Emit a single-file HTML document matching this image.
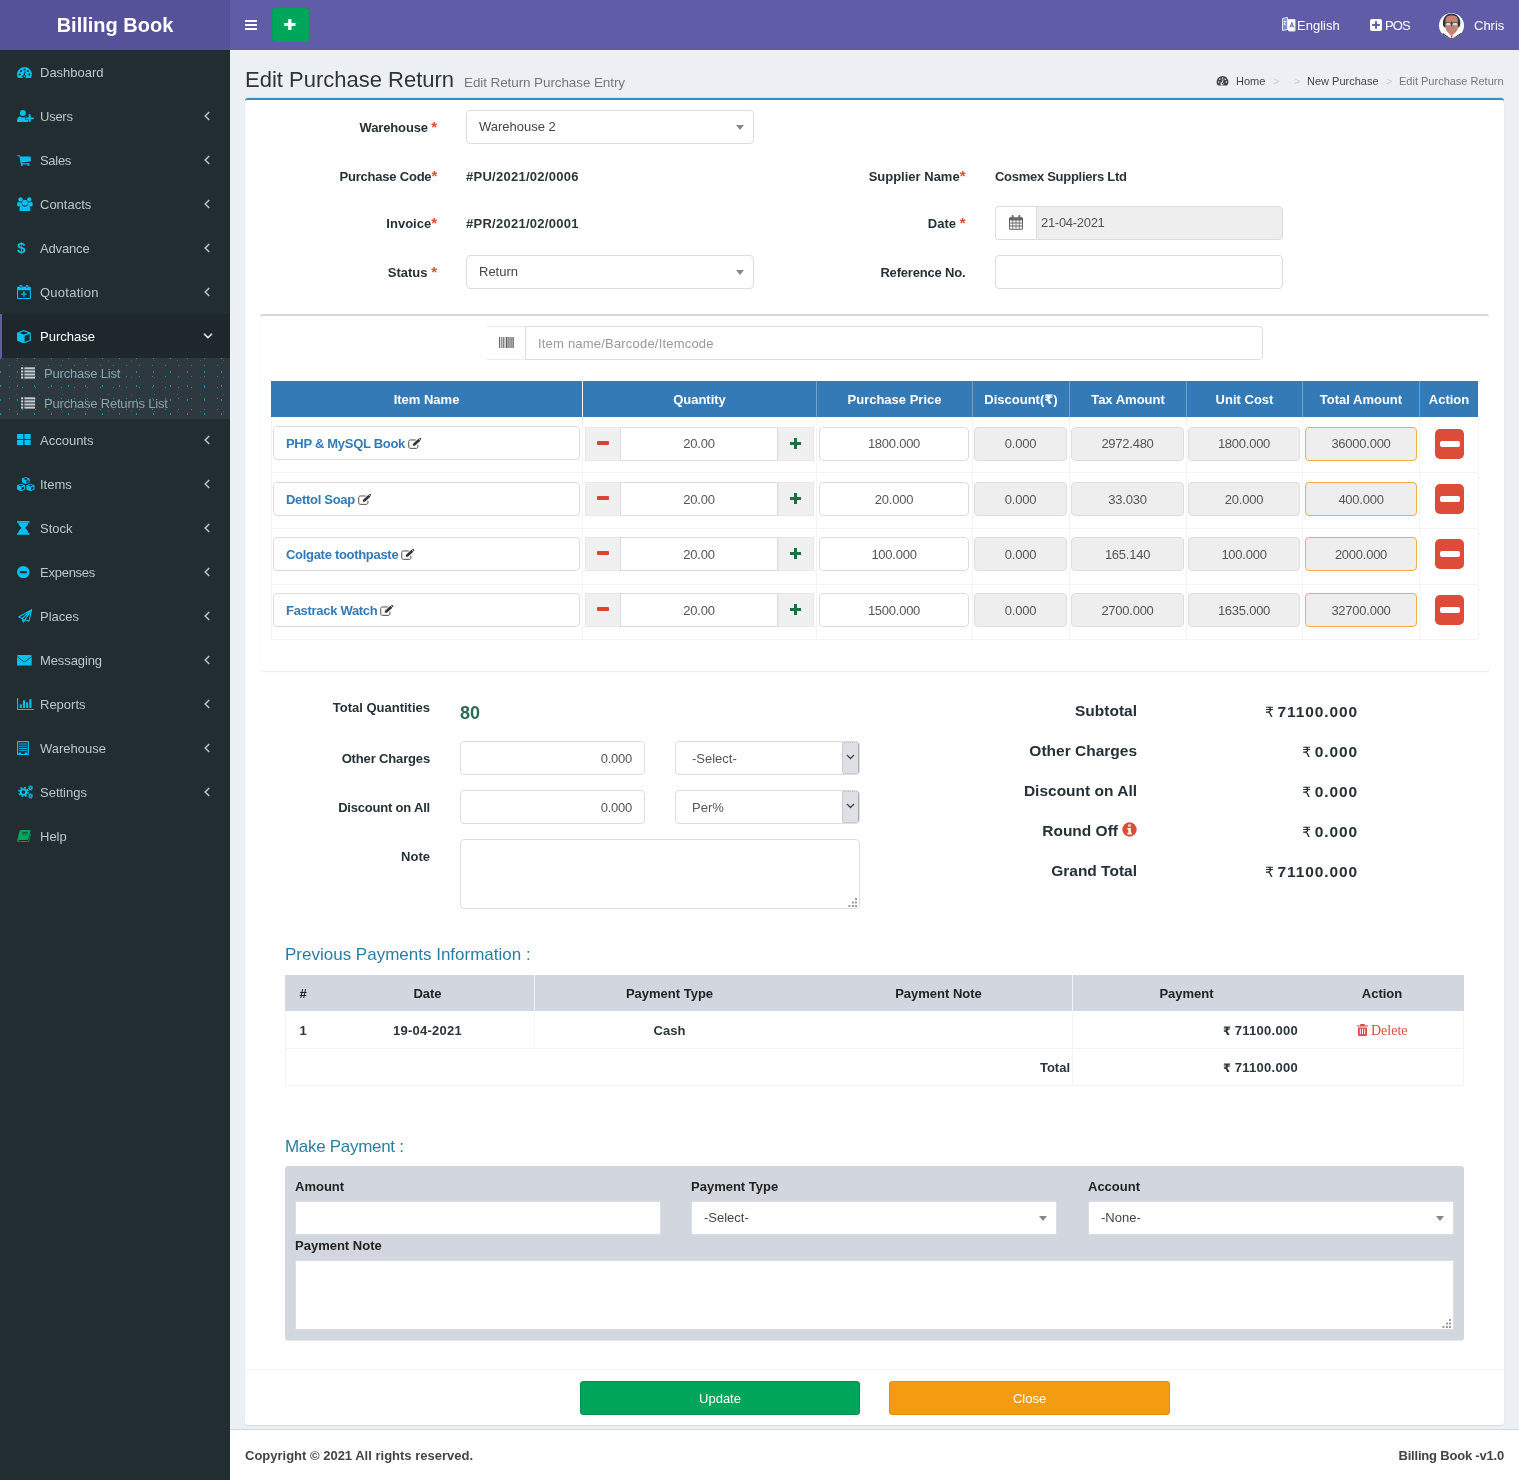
<!DOCTYPE html>
<html lang="en">
<head>
<meta charset="utf-8">
<title>Billing Book | Edit Purchase Return</title>
<style>
*{box-sizing:border-box}
html,body{margin:0;padding:0}
body{width:1519px;height:1480px;overflow:hidden;background:#ecf0f5;font-family:"Liberation Sans",sans-serif;font-size:13px;line-height:20px;color:#2b353b;position:relative}
.wrap{position:absolute;left:0;top:0;width:1519px;height:1480px;will-change:transform}
svg{display:block}
a{text-decoration:none;color:inherit}
.p{position:absolute;white-space:nowrap}
/* header */
.logo{position:absolute;left:0;top:0;width:230px;height:50px;background:#555299;color:#fff;font-weight:700;font-size:20px;line-height:50px;text-align:center}
.navbar{position:absolute;left:230px;top:0;width:1289px;height:50px;background:#605ca8;color:#fff}
.navbar .abs{position:absolute}
.addbtn{position:absolute;left:42px;top:8px;width:37px;height:34px;background:#00a65a;border:1px solid #00a157;border-radius:3px}
.nv{position:absolute;top:16px;line-height:20px;font-size:13px;color:#fff;white-space:nowrap}
/* sidebar */
.sidebar{position:absolute;left:0;top:50px;width:230px;height:1430px;background:#222d32}
.mi{position:absolute;left:0;width:230px;height:44px;color:#b8c7ce;font-size:13px;line-height:20px}
.mi .tx{position:absolute;left:40px;top:13px;white-space:nowrap}
.mi .ic{position:absolute}
.mi .ic.dl{font-size:15.5px;font-weight:700;line-height:16px;color:#00c0ef;left:17px;top:14px}
.mi .ar{position:absolute;left:204px;top:17px}
.mi.active{background:#1e282c;color:#fff;border-left:2px solid #605ca8}
.mi.active .tx{left:38px}.mi.active .ar{left:201px;top:19px}
.sub{position:absolute;left:0;top:308px;width:230px;height:61px;background-color:#2d393f;overflow:hidden;background-image:radial-gradient(circle,#1b8db5 0.5px,transparent 0.95px),radial-gradient(circle,#1b8db5 0.5px,transparent 0.95px),radial-gradient(circle,#5b574f 0.5px,transparent 0.9px);background-size:13px 11px,17px 14px,23px 17px;background-position:3px 2px,9px 7px,5px 11px}
.sub .si{position:absolute;left:0;width:230px;height:30px;color:#8aa4af;font-size:13px;line-height:20px;letter-spacing:-.2px}
.sub .si .tx{position:absolute;left:44px;top:6px;white-space:nowrap}
.sub .si .ic{position:absolute;left:21px;top:8.5px}
/* content */
.h1{left:245px;top:63px;font-size:22px;line-height:34px;color:#2b353b}
.h1s{left:464px;top:73px;font-size:13.5px;letter-spacing:-.1px;line-height:20px;color:#777}
.bc{top:71px;font-size:11px;line-height:20px;color:#444}
.bc.g{color:#777}.bc.s{color:#ccc}
.box{position:absolute;left:245px;top:98px;width:1259px;height:1327px;background:#fff;border-top:2px solid #3c8dbc;border-radius:3px;box-shadow:0 1px 1px rgba(0,0,0,.1),0 -1px 0 rgba(60,141,188,.15)}
.lb{font-weight:700;color:#263137;text-align:right;line-height:20px}
.lb i,.rq{color:#dd4b39;font-style:normal;font-size:15px;line-height:10px}
.b{font-weight:700}
.inp{position:absolute;height:34px;border:1px solid #dadde4;background:#fff;border-radius:4px;font-size:13px;line-height:32px;color:#555;white-space:nowrap;overflow:hidden}
.inp.ro{background:#eee}
.sel2 .tx{position:absolute;left:12px;top:0;color:#444}
.caret{position:absolute;width:0;height:0;border-left:4px solid transparent;border-right:4px solid transparent;border-top:5px solid #888}
.ibox{position:absolute;left:260px;top:314px;width:1229px;height:357px;background:#fff;border-top:2px solid #d2d6de;border-radius:3px;box-shadow:0 1px 1px rgba(0,0,0,.08), 0 0 1px rgba(0,0,0,.06)}
.th{position:absolute;top:381px;height:36px;background:#337ab7;color:#fff;font-weight:700;text-align:center;line-height:38px;font-size:13px;border-left:1px solid #f4f4f4}
.vl{position:absolute;width:1px;background:#f4f4f4}
.hl{position:absolute;height:1px;background:#f4f4f4}
.c{text-align:center}
.r{text-align:right}
.qb{position:absolute;width:36px;height:34px;background:#f0f0f0;border:1px solid #e8e8e8}
.del{position:absolute;left:1435px;width:29px;height:30px;background:#dd4b39;border-radius:5px}
.del:after{content:"";position:absolute;left:4.5px;top:12px;width:20px;height:5.5px;border-radius:2px;background:#fff}
.tot{font-size:15.5px;font-weight:700;color:#263137;text-align:right;line-height:24px}
.hd{font-size:17px;color:#2a7ea3;line-height:24px}
.btn{position:absolute;height:34px;border-radius:3px;color:#fff;text-align:center;line-height:34px;font-size:13px}
.footer{position:absolute;left:230px;top:1429px;width:1289px;height:51px;background:#fff;border-top:1px solid #d2d6de;color:#444;font-weight:700}
.num{letter-spacing:-.25px}
.bn{letter-spacing:.27px}
.rs{font-family:"DejaVu Sans",sans-serif}
</style>
</head>
<body>
<div class="wrap">
<div class="logo">Billing Book</div>
<div class="navbar">
<svg class="abs" style="left:14px;top:20px" width="14" height="11" viewBox="0 0 14 11"><g fill="#fff"><rect x="1" y="0" width="12" height="2"/><rect x="1" y="4" width="12" height="2"/><rect x="1" y="8" width="12" height="2"/></g></svg>
<a class="addbtn"><svg style="position:absolute;left:11px;top:10px" width="13" height="13" viewBox="0 0 13 13"><path fill="#fff" d="M4.2 0h3.3v3.9h4v3.2h-4V11H4.2V7.1H.3V3.9h3.9z"/></svg></a>
<svg class="abs" style="left:1052px;top:17px" width="14" height="16" viewBox="0 0 14 16"><g fill="none" stroke="#dfe6f5" stroke-width="1"><path d="M0.5 1.5l5 -1v12l-5 1z" fill="#7e8fd0"/><path d="M5.5 2.5h7.5v11.5H7l-1.5-1.5z" fill="#fff"/></g><path d="M8 10.5l1.8-5 1.8 5M8.6 9h2.4" stroke="#605ca8" stroke-width="1" fill="none"/><path d="M1.8 4.5h2.6M3 3.5v1c0 2-1 3-1.4 3.6M1.8 6c.6 1.2 1.6 1.8 2.6 2" stroke="#fff" stroke-width=".8" fill="none"/></svg>
<span class="nv" style="left:1067px">English</span>
<svg class="abs" style="left:1140px;top:19px" width="12" height="12" viewBox="0 0 12 12"><path fill="#fff" fill-rule="evenodd" d="M2 0h8a2 2 0 0 1 2 2v8a2 2 0 0 1-2 2H2a2 2 0 0 1-2-2V2a2 2 0 0 1 2-2zM5 2.2v2.8H2.2v2H5v2.8h2V7h2.8V5H7V2.2z"/></svg>
<span class="nv" style="left:1155px;letter-spacing:-.9px">POS</span>
<svg class="abs" style="left:1209px;top:13px" width="25" height="25" viewBox="0 0 25 25"><defs><clipPath id="av"><circle cx="12.5" cy="12.5" r="12.5"/></clipPath><pattern id="dt" width="2.4" height="2.4" patternUnits="userSpaceOnUse"><circle cx=".6" cy=".6" r=".6" fill="#7f8c93"/><circle cx="1.8" cy="1.8" r=".6" fill="#7f8c93"/></pattern></defs><g clip-path="url(#av)"><rect width="25" height="25" fill="#fff"/><path d="M4.2 13C2.6 6 6.5 .4 12.6.4S22.6 6 21 13l-1.5 1.5H5.7z" fill="#2b373d"/><path d="M6.6 7C6.8 3.3 9.5 2.5 12.7 2.5S18.6 3.3 18.8 7l.3 6.5c0 2.6-1.2 4.4-2.6 5.9-1.2 1.3-2.5 2.3-3.8 2.9-1.3-.6-2.6-1.6-3.8-2.9-1.4-1.5-2.6-3.3-2.6-5.9z" fill="#e0826b"/><path d="M6.6 7C6.8 3.3 9.5 2.5 12.7 2.5S18.6 3.3 18.8 7l.3 6.5c0 2.6-1.2 4.4-2.6 5.9-1.2 1.3-2.5 2.3-3.8 2.9-1.3-.6-2.6-1.6-3.8-2.9-1.4-1.5-2.6-3.3-2.6-5.9z" fill="url(#dt)"/><path d="M5.4 9.4h14.6v1H5.4z" fill="#2b373d"/><rect x="7.2" y="10" width="4.2" height="2.2" rx=".8" fill="#d9dde0"/><rect x="14" y="10" width="4.2" height="2.2" rx=".8" fill="#d9dde0"/><path d="M12.3 8.5h.8v5h-.8z" fill="#2b373d"/><path d="M3.5 20.5l7 4.8M22 20.5l-7 4.8" stroke="#2b373d" stroke-width="1.3" fill="none"/><path d="M11.3 22.6h2.8l-1.4 2.4z" fill="#e02b20"/></g></svg>
<span class="nv" style="left:1244px">Chris</span>
</div>
<div class="sidebar">
<a class="mi" style="top:0px"><svg class="ic" style="left:17.1px;top:16.6px" width="14.9" height="11.6" viewBox="0.7 2.2 14.6 11.6" preserveAspectRatio="none"><path fill="#00c0ef" d="M8 2.2a7.3 7.3 0 0 0-7.3 7.3c0 1.4.4 2.8 1.2 3.9.15.25.4.4.7.4h10.8c.3 0 .55-.15.7-.4a7.3 7.3 0 0 0-6.1-11.2z"/><g fill="#222d32"><circle cx="3.3" cy="9.6" r="1"/><circle cx="4.7" cy="6.2" r="1"/><circle cx="8" cy="4.6" r="1"/><circle cx="12.7" cy="9.6" r="1"/><circle cx="11.3" cy="6.2" r="1"/><path d="M9.2 6.6l-.7 3.4a1.8 1.8 0 1 1-1-.2l.8-3.4z"/></g><circle cx="7.9" cy="11.5" r=".8" fill="#00c0ef"/></svg><span class="tx">Dashboard</span></a>
<a class="mi" style="top:44px"><svg class="ic" style="left:17.1px;top:15.6px" width="16.8" height="12.3" viewBox="0 0 16.8 12.3" preserveAspectRatio="none"><g fill="#00c0ef"><circle cx="5.9" cy="3" r="3"/><path d="M0 11.2c0-2.7 1-4.6 2.9-4.8.8.7 1.8 1.1 3 1.1s2.2-.4 3-1.1c.5.05.9.2 1.2.5H8v2.9h2.9v2.2c-.3.2-.7.3-1.2.3H1.9C.8 12.3 0 11.9 0 11.2z"/><path d="M11.6 4.3h2.1v3.1h3.1v1.9h-3.1v3h-2.1v-3H8.6V7.4h3z"/></g></svg><span class="tx" style="letter-spacing:-0.25px">Users</span><svg class="ar" width="6" height="10" viewBox="0 0 6 10"><path fill="none" stroke="#b8c7ce" stroke-width="1.5" d="M5.2 1L1.2 5l4 4"/></svg></a>
<a class="mi" style="top:88px"><svg class="ic" style="left:17.1px;top:16.7px" width="13.9" height="11.1" viewBox="-0.5 0 14.5 11" preserveAspectRatio="none"><g fill="#00c0ef"><path d="M0 .2h2.1c.35 0 .6.25.65.55L2.9 1.6H13.4c.35 0 .6.3.6.6v3.6c0 .3-.25.55-.55.6L4.3 7.4l.15.9H12.5c.3 0 .55.25.55.55s-.25.55-.55.55H3.9c-.3 0-.5-.2-.55-.45L2 1.3H0C-.3 1.3-.5 1.05-.5.75S-.3.2 0 .2z"/><circle cx="4.6" cy="10" r="1"/><circle cx="11.4" cy="10" r="1"/></g></svg><span class="tx" style="letter-spacing:-0.3px">Sales</span><svg class="ar" width="6" height="10" viewBox="0 0 6 10"><path fill="none" stroke="#b8c7ce" stroke-width="1.5" d="M5.2 1L1.2 5l4 4"/></svg></a>
<a class="mi" style="top:132px"><svg class="ic" style="left:17.1px;top:14.8px" width="15.8" height="14.4" viewBox="0 0 15.8 14.4" preserveAspectRatio="none"><g fill="#00c0ef"><circle cx="7.9" cy="5.7" r="2.9"/><circle cx="3.5" cy="2.4" r="2.2"/><circle cx="12.3" cy="2.4" r="2.2"/><path d="M3.6 14.4c-.7 0-1.2-.5-1.2-1.3 0-2.6.8-4.6 2.6-4.8.8.9 1.8 1.4 2.9 1.4s2.1-.5 2.9-1.4c1.8.2 2.6 2.2 2.6 4.8 0 .8-.5 1.3-1.2 1.3z"/><path d="M0 7.6c0-1.6.5-2.7 1.5-2.8.5.5 1.2.8 2 .8.5 0 .9-.1 1.3-.3-.1.3-.1.6-.1.9 0 .7.2 1.4.6 2-.8.1-1.5.5-2 1.2H1.3C.5 9.4 0 8.4 0 7.6zM15.8 7.6c0-1.6-.5-2.7-1.5-2.8-.5.5-1.2.8-2 .8-.5 0-.9-.1-1.3-.3.1.3.1.6.1.9 0 .7-.2 1.4-.6 2 .8.1 1.5.5 2 1.2h2C15.3 9.4 15.8 8.4 15.8 7.6z"/></g></svg><span class="tx">Contacts</span><svg class="ar" width="6" height="10" viewBox="0 0 6 10"><path fill="none" stroke="#b8c7ce" stroke-width="1.5" d="M5.2 1L1.2 5l4 4"/></svg></a>
<a class="mi" style="top:176px"><span class="ic dl">$</span><span class="tx" style="letter-spacing:-0.15px">Advance</span><svg class="ar" width="6" height="10" viewBox="0 0 6 10"><path fill="none" stroke="#b8c7ce" stroke-width="1.5" d="M5.2 1L1.2 5l4 4"/></svg></a>
<a class="mi" style="top:220px"><svg class="ic" style="left:17.1px;top:15px" width="13.9" height="14" viewBox="0 0 14 14" preserveAspectRatio="none"><g fill="#00c0ef"><path fill-rule="evenodd" d="M1 1.8h12c.55 0 1 .45 1 1V13c0 .55-.45 1-1 1H1c-.55 0-1-.45-1-1V2.8c0-.55.45-1 1-1zM1.1 5.2v7.7h11.8V5.2z"/><rect x="2.5" y="0" width="2.8" height="3.6" rx=".9"/><rect x="8.7" y="0" width="2.8" height="3.6" rx=".9"/><path d="M6.3 6.4h1.4v2h2v1.4h-2v2H6.3v-2h-2V8.4h2z"/></g><g fill="#222d32" opacity=".55"><rect x="3.3" y="1" width="1.2" height="2"/><rect x="9.5" y="1" width="1.2" height="2"/></g></svg><span class="tx" style="letter-spacing:0.25px">Quotation</span><svg class="ar" width="6" height="10" viewBox="0 0 6 10"><path fill="none" stroke="#b8c7ce" stroke-width="1.5" d="M5.2 1L1.2 5l4 4"/></svg></a>
<a class="mi active" style="top:264px"><svg class="ic" style="left:15.2px;top:15.8px" width="13.8" height="13.5" viewBox="0 0 13.8 13.5" preserveAspectRatio="none"><path fill="#00c0ef" d="M6.9 0l6.5 2.4c.25.1.4.3.4.6v7.2c0 .3-.15.5-.4.6L6.9 13.5.4 10.8C.15 10.7 0 10.5 0 10.2V3c0-.3.15-.5.4-.6z"/><g fill="#1e282c"><path d="M6.9 1.3L2.6 2.9l4.3 1.6 4.3-1.6z"/><path d="M7.6 5.8v6.2l5-2.1V3.9z"/></g></svg><span class="tx">Purchase</span><svg class="ar" width="10" height="6" viewBox="0 0 10 6"><path fill="none" stroke="#fff" stroke-width="1.5" d="M1 0.8l4 4 4-4"/></svg></a>
<a class="mi" style="top:368px"><svg class="ic" style="left:17.3px;top:15.9px" width="13.7" height="11.0" viewBox="0 0 13.7 11" preserveAspectRatio="none"><g fill="#00c0ef"><rect x="0" y="0" width="6.3" height="5"/><rect x="7.4" y="0" width="6.3" height="5"/><rect x="0" y="6" width="6.3" height="5"/><rect x="7.4" y="6" width="6.3" height="5"/></g></svg><span class="tx">Accounts</span><svg class="ar" width="6" height="10" viewBox="0 0 6 10"><path fill="none" stroke="#b8c7ce" stroke-width="1.5" d="M5.2 1L1.2 5l4 4"/></svg></a>
<a class="mi" style="top:412px"><svg class="ic" style="left:17.3px;top:15px" width="17.5" height="14.3" viewBox="0.8 0.6 16.4 14.2" preserveAspectRatio="none"><g fill="#00c0ef"><path d="M9 0.6l3.6 1.5v3.8L9 7.6 5.4 5.9V2.1z"/><path d="M4.6 7.2l3.8 1.6v4.2L4.6 14.8.8 13V8.8z"/><path d="M13.4 7.2l3.8 1.6v4.2l-3.8 1.8L9.6 13V8.8z"/></g><g fill="#222d32"><path d="M9 1.5L6.7 2.5 9 3.5l2.3-1z"/><path d="M9.5 4.4v2.1l2.2-1V3.5z"/><path d="M4.6 8.1L2.2 9.1l2.4 1 2.4-1z"/><path d="M5.1 11v2.5l2.4-1.1V10z"/><path d="M13.4 8.1l-2.4 1 2.4 1 2.4-1z"/><path d="M13.9 11v2.5l2.4-1.1V10z"/></g></svg><span class="tx">Items</span><svg class="ar" width="6" height="10" viewBox="0 0 6 10"><path fill="none" stroke="#b8c7ce" stroke-width="1.5" d="M5.2 1L1.2 5l4 4"/></svg></a>
<a class="mi" style="top:456px"><svg class="ic" style="left:17.3px;top:15.3px" width="12.6" height="13.8" viewBox="1 1 13 14.4" preserveAspectRatio="none"><g fill="#00c0ef"><rect x="1" y="1" width="13" height="1.8" rx=".3"/><rect x="1" y="13.6" width="13" height="1.8" rx=".3"/><path d="M2.4 2.8h10.2c0 2.4-1.6 4-3.4 5.4 1.8 1.4 3.4 3 3.4 5.4H2.4c0-2.4 1.6-4 3.4-5.4C4 6.8 2.4 5.2 2.4 2.8z"/></g></svg><span class="tx">Stock</span><svg class="ar" width="6" height="10" viewBox="0 0 6 10"><path fill="none" stroke="#b8c7ce" stroke-width="1.5" d="M5.2 1L1.2 5l4 4"/></svg></a>
<a class="mi" style="top:500px"><svg class="ic" style="left:17.3px;top:16px" width="12.6" height="12.2" viewBox="0 0 12.6 12.2" preserveAspectRatio="none"><ellipse cx="6.3" cy="6.1" rx="6.3" ry="6.1" fill="#00c0ef"/><rect x="2.9" y="4.9" width="6.8" height="2.3" rx=".4" fill="#222d32"/></svg><span class="tx" style="letter-spacing:-0.25px">Expenses</span><svg class="ar" width="6" height="10" viewBox="0 0 6 10"><path fill="none" stroke="#b8c7ce" stroke-width="1.5" d="M5.2 1L1.2 5l4 4"/></svg></a>
<a class="mi" style="top:544px"><svg class="ic" style="left:17.7px;top:15px" width="14.3" height="13.9" viewBox="0.5 0.5 15 14.8" preserveAspectRatio="none"><path fill="none" stroke="#00c0ef" stroke-width="1.2" stroke-linejoin="round" d="M14.8 1.2L1.2 9l3.8 1.6 1 4 2.4-2.6 3.6 1.6zM5 10.6l9.8-9.4-8.8 13.4"/><path fill="#00c0ef" d="M5.2 10.8l2.6 1.1L6.1 14z"/></svg><span class="tx">Places</span><svg class="ar" width="6" height="10" viewBox="0 0 6 10"><path fill="none" stroke="#b8c7ce" stroke-width="1.5" d="M5.2 1L1.2 5l4 4"/></svg></a>
<a class="mi" style="top:588px"><svg class="ic" style="left:17.3px;top:17.4px" width="14.7" height="10.6" viewBox="0 0 14.7 10.6" preserveAspectRatio="none"><rect x="0" y="0" width="14.7" height="10.6" rx=".9" fill="#00c0ef"/><path d="M0 1.6l6.2 4.7c.7.5 1.6.5 2.3 0l6.2-4.7" fill="none" stroke="#222d32" stroke-width="1" opacity=".8"/></svg><span class="tx" style="letter-spacing:-0.1px">Messaging</span><svg class="ar" width="6" height="10" viewBox="0 0 6 10"><path fill="none" stroke="#b8c7ce" stroke-width="1.5" d="M5.2 1L1.2 5l4 4"/></svg></a>
<a class="mi" style="top:632px"><svg class="ic" style="left:17.1px;top:15.9px" width="16.8" height="12.1" viewBox="0.6 1.8 15.8 12.6" preserveAspectRatio="none"><g fill="#00c0ef"><path d="M0.6 1.8h1.1v11.5h14.7v1.1H0.6z"/><rect x="3.2" y="8.4" width="2" height="3.8"/><rect x="6.2" y="4.2" width="2" height="8"/><rect x="9.2" y="6.4" width="2" height="5.8"/><rect x="12.2" y="3" width="2" height="9.2"/></g></svg><span class="tx">Reports</span><svg class="ar" width="6" height="10" viewBox="0 0 6 10"><path fill="none" stroke="#b8c7ce" stroke-width="1.5" d="M5.2 1L1.2 5l4 4"/></svg></a>
<a class="mi" style="top:676px"><svg class="ic" style="left:17.1px;top:15px" width="11.9" height="14.1" viewBox="0 0 12 14" preserveAspectRatio="none"><g fill="none" stroke="#00c0ef"><rect x=".6" y=".6" width="10.8" height="12.8" stroke-width="1.2"/><path d="M2 3h8M2 5.2h8M2 7.4h8M2 9.6h8" stroke-width=".9"/></g><path fill="#00c0ef" d="M1.8 11.4h2.4v1.4h3.6v-1.4h2.4v2H1.8z"/></svg><span class="tx">Warehouse</span><svg class="ar" width="6" height="10" viewBox="0 0 6 10"><path fill="none" stroke="#b8c7ce" stroke-width="1.5" d="M5.2 1L1.2 5l4 4"/></svg></a>
<a class="mi" style="top:720px"><svg class="ic" style="left:17.5px;top:15px" width="15.5" height="14" viewBox="0 0.4 17 15.2" preserveAspectRatio="none"><g fill="none" stroke="#00c0ef"><circle cx="6" cy="8" r="3.1" stroke-width="2.2"/><circle cx="6" cy="8" r="5" stroke-width="1.6" stroke-dasharray="2 1.93"/><circle cx="13.8" cy="3.6" r="1.5" stroke-width="1.3"/><circle cx="13.8" cy="3.6" r="2.6" stroke-width="1" stroke-dasharray="1.1 0.94"/><circle cx="13.8" cy="12.4" r="1.5" stroke-width="1.3"/><circle cx="13.8" cy="12.4" r="2.6" stroke-width="1" stroke-dasharray="1.1 0.94"/></g></svg><span class="tx">Settings</span><svg class="ar" width="6" height="10" viewBox="0 0 6 10"><path fill="none" stroke="#b8c7ce" stroke-width="1.5" d="M5.2 1L1.2 5l4 4"/></svg></a>
<a class="mi" style="top:764px"><svg class="ic" style="left:17.1px;top:16px" width="13.8" height="11.9" viewBox="0.6 1.6 15 13.6" preserveAspectRatio="none"><path fill="#00a65a" d="M5.6 1.6h9c.7 0 1 .4.8 1.1l-2.4 9.3c-.2.7-.7 1.1-1.4 1.1H3c-.9 0-1.4.5-1 1 .2.3.6.4 1 .4h9.2c.5 0 .9-.3 1-.8l2.4-8.6c.4.3.5.8.4 1.3l-2.4 8.3c-.2.7-.8 1.1-1.5 1.1H2.8c-1.5 0-2.4-1.2-2-2.6L3.2 3.4C3.5 2.4 4.4 1.6 5.6 1.6z"/><g stroke="#222d32" stroke-width=".8"><path d="M6.4 4.4h6M6 6.2h6"/></g></svg><span class="tx">Help</span></a>
<div class="sub"><a class="si" style="top:0"><svg class="ic" width="14" height="12" viewBox="0 0 14 12"><g fill="#c3ccd1"><rect x="0" y="0.3" width="2.2" height="2"/><rect x="0" y="3.4" width="2.2" height="2"/><rect x="0" y="6.5" width="2.2" height="2"/><rect x="0" y="9.6" width="2.2" height="2"/><rect x="3.4" y="0.3" width="10.6" height="2"/><rect x="3.4" y="3.4" width="10.6" height="2"/><rect x="3.4" y="6.5" width="10.6" height="2"/><rect x="3.4" y="9.6" width="10.6" height="2"/></g></svg><span class="tx">Purchase List</span></a><a class="si" style="top:30px"><svg class="ic" width="14" height="12" viewBox="0 0 14 12"><g fill="#c3ccd1"><rect x="0" y="0.3" width="2.2" height="2"/><rect x="0" y="3.4" width="2.2" height="2"/><rect x="0" y="6.5" width="2.2" height="2"/><rect x="0" y="9.6" width="2.2" height="2"/><rect x="3.4" y="0.3" width="10.6" height="2"/><rect x="3.4" y="3.4" width="10.6" height="2"/><rect x="3.4" y="6.5" width="10.6" height="2"/><rect x="3.4" y="9.6" width="10.6" height="2"/></g></svg><span class="tx">Purchase Returns List</span></a></div>
</div>
<div class="p h1">Edit Purchase Return</div>
<div class="p h1s">Edit Return Purchase Entry</div>
<svg class="p" style="left:1216px;top:75px" width="13" height="12" viewBox="0 0 16 14"><path fill="#444" d="M8 0.8a7.3 7.3 0 0 0-7.3 7.3c0 1.4.4 2.8 1.2 3.9.15.25.4.4.7.4h10.8c.3 0 .55-.15.7-.4A7.3 7.3 0 0 0 8 .8z"/><g fill="#ecf0f5"><circle cx="3.3" cy="8.2" r="1"/><circle cx="4.7" cy="4.8" r="1"/><circle cx="8" cy="3.3" r="1"/><circle cx="12.7" cy="8.2" r="1"/><circle cx="11.3" cy="4.8" r="1"/><path d="M9.4 5.2l-1 3.6a1.9 1.9 0 1 1-1.1-.3l1-3.6z"/></g><circle cx="7.9" cy="10.2" r="1" fill="#444"/></svg>
<span class="p bc" style="left:1236px">Home</span>
<span class="p bc s" style="left:1273px">&gt;</span>
<span class="p bc s" style="left:1294px">&gt;</span>
<span class="p bc" style="left:1307px">New Purchase</span>
<span class="p bc s" style="left:1386px">&gt;</span>
<span class="p bc g" style="left:1399px">Edit Purchase Return</span>
<div class="box"></div>
<div class="p lb" style="left:237px;width:200px;top:118px;letter-spacing:-0.15px">Warehouse <i>*</i></div>
<div class="p lb" style="left:237px;width:200px;top:167px;letter-spacing:-0.22px">Purchase Code<i>*</i></div>
<div class="p lb" style="left:237px;width:200px;top:214px">Invoice<i>*</i></div>
<div class="p lb" style="left:237px;width:200px;top:263px">Status <i>*</i></div>
<div class="p lb" style="left:765.5px;width:200px;top:167px">Supplier Name<i>*</i></div>
<div class="p lb" style="left:765.5px;width:200px;top:214px">Date <i>*</i></div>
<div class="p lb" style="left:765.5px;width:200px;top:263px;letter-spacing:-0.18px">Reference No.</div>
<div class="inp sel2" style="left:466px;top:110px;width:288px;border-radius:4px"><span class="tx">Warehouse 2</span><span class="caret" style="right:9px;top:14px"></span></div>
<div class="inp sel2" style="left:466px;top:255px;width:288px;border-radius:4px"><span class="tx">Return</span><span class="caret" style="right:9px;top:14px"></span></div>
<div class="p b bn" style="left:466px;top:167px">#PU/2021/02/0006</div>
<div class="p b bn" style="left:466px;top:214px">#PR/2021/02/0001</div>
<div class="p b" style="left:995px;top:167px;letter-spacing:-.28px">Cosmex Suppliers Ltd</div>
<div class="inp" style="left:995px;top:206px;width:42px;border-radius:4px 0 0 4px;border-right:0"></div>
<svg class="p" style="left:1009px;top:215px" width="14" height="15" viewBox="0 0 14 15"><g fill="#666"><path fill-rule="evenodd" d="M1 2.2h12c.5 0 1 .5 1 1v10.6c0 .5-.5 1-1 1H1c-.5 0-1-.5-1-1V3.2c0-.5.5-1 1-1zM1 5.4v2.2h2.4V5.4zM4.2 5.4v2.2h2.4V5.4zM7.4 5.4v2.2h2.4V5.4zM10.6 5.4v2.2H13V5.4zM1 8.4v2.2h2.4V8.4zM4.2 8.4v2.2h2.4V8.4zM7.4 8.4v2.2h2.4V8.4zM10.6 8.4v2.2H13V8.4zM1 11.4v2.4h2.4V11.4zM4.2 11.4v2.4h2.4V11.4zM7.4 11.4v2.4h2.4V11.4zM10.6 11.4v2.4H13V11.4z"/><rect x="2.6" y="0" width="2" height="3.6" rx=".8"/><rect x="9.4" y="0" width="2" height="3.6" rx=".8"/></g></svg>
<div class="inp ro" style="left:1036px;top:206px;width:247px;border-radius:0 4px 4px 0;padding-left:4px;letter-spacing:-.3px">21-04-2021</div>
<div class="inp" style="left:995px;top:255px;width:288px"></div>
<div class="ibox"></div>
<div class="p" style="left:487px;top:326px;width:39px;height:34px;border-top:1px solid #e9ebf0;border-bottom:1px solid #e9ebf0"></div>
<svg class="p" style="left:499px;top:337px" width="15" height="11" viewBox="0 0 15 12" preserveAspectRatio="none"><g fill="#666"><rect x="0" y="0" width="1.2" height="12"/><rect x="2" y="0" width=".7" height="12"/><rect x="3.6" y="0" width="1.2" height="12"/><rect x="5.6" y="0" width=".7" height="12"/><rect x="7" y="0" width="1.6" height="12"/><rect x="9.2" y="0" width=".7" height="12"/><rect x="10.4" y="0" width="1.2" height="12"/><rect x="12.2" y="0" width=".7" height="12"/><rect x="13.4" y="0" width="1.4" height="12"/></g></svg>
<div class="inp" style="left:525px;top:326px;width:738px;padding-left:12px;color:#999;letter-spacing:.2px;border-radius:0 4px 4px 0;line-height:34px">Item name/Barcode/Itemcode</div>
<div class="th" style="left:271px;width:311px;border-left:0;">Item Name</div>
<div class="th" style="left:582px;width:234px;">Quantity</div>
<div class="th" style="left:816px;width:156px;border-left-color:rgba(255,255,255,.3);">Purchase Price</div>
<div class="th" style="left:972px;width:97px;border-left-color:rgba(255,255,255,.3);">Discount(<span class="rs">₹</span>)</div>
<div class="th" style="left:1069px;width:117px;border-left-color:rgba(255,255,255,.3);">Tax Amount</div>
<div class="th" style="left:1186px;width:116px;border-left-color:rgba(255,255,255,.3);">Unit Cost</div>
<div class="th" style="left:1302px;width:117px;border-left-color:rgba(255,255,255,.3);">Total Amount</div>
<div class="th" style="left:1419px;width:59px;border-left-color:rgba(255,255,255,.3);">Action</div>
<div class="vl" style="left:271px;top:417px;height:222px"></div>
<div class="vl" style="left:582px;top:417px;height:222px"></div>
<div class="vl" style="left:816px;top:417px;height:222px"></div>
<div class="vl" style="left:972px;top:417px;height:222px"></div>
<div class="vl" style="left:1069px;top:417px;height:222px"></div>
<div class="vl" style="left:1186px;top:417px;height:222px"></div>
<div class="vl" style="left:1302px;top:417px;height:222px"></div>
<div class="vl" style="left:1419px;top:417px;height:222px"></div>
<div class="vl" style="left:1478px;top:417px;height:222px"></div>
<div class="hl" style="left:271px;top:472px;width:1208px"></div>
<div class="hl" style="left:271px;top:528px;width:1208px"></div>
<div class="hl" style="left:271px;top:584px;width:1208px"></div>
<div class="hl" style="left:271px;top:639px;width:1208px"></div>
<div class="inp b" style="left:273px;top:426px;width:307px;padding-left:12px;color:#337ab7;font-size:13px;letter-spacing:-.3px;line-height:34px">PHP &amp; MySQL Book<svg style="display:inline-block;vertical-align:-1px;margin-left:3px" width="13.5" height="11.5" viewBox="0 0 15 14" preserveAspectRatio="none"><g fill="none" stroke="#444" stroke-width="1.1"><path d="M11 8.2v2.6c0 1-.8 1.8-1.8 1.8H2.6c-1 0-1.8-.8-1.8-1.8V4.2c0-1 .8-1.8 1.8-1.8h6"/></g><path fill="#333" d="M5.4 7.2l6.2-6.2 2.2 2.2-6.2 6.2H5.4zM12.2.4l.6-.4c.3-.2.7-.2 1 .1l1 1c.3.3.3.7.1 1l-.5.6z"/></svg></div>
<div class="qb" style="left:585px;top:427px"><span style="position:absolute;left:11px;top:13px;width:12px;height:4px;background:#d9432f;border-radius:1px"></span></div>
<div class="inp c num" style="left:620px;top:427px;width:158px;border-radius:0">20.00</div>
<div class="qb" style="left:778px;top:427px"><span style="position:absolute;left:11px;top:14px;width:11px;height:3px;background:#1e6e46"></span><span style="position:absolute;left:15px;top:10px;width:3px;height:11px;background:#1e6e46"></span></div>
<div class="inp c num" style="left:819px;top:427px;width:150px">1800.000</div>
<div class="inp ro c num" style="left:974px;top:427px;width:93px">0.000</div>
<div class="inp ro c num" style="left:1071px;top:427px;width:113px">2972.480</div>
<div class="inp ro c num" style="left:1188px;top:427px;width:112px">1800.000</div>
<div class="inp ro c num" style="left:1305px;top:427px;width:112px;border-color:#f0ad4e">36000.000</div>
<div class="del" style="top:429px"></div>
<div class="inp b" style="left:273px;top:482px;width:307px;padding-left:12px;color:#337ab7;font-size:13px;letter-spacing:-.3px;line-height:34px">Dettol Soap<svg style="display:inline-block;vertical-align:-1px;margin-left:3px" width="13.5" height="11.5" viewBox="0 0 15 14" preserveAspectRatio="none"><g fill="none" stroke="#444" stroke-width="1.1"><path d="M11 8.2v2.6c0 1-.8 1.8-1.8 1.8H2.6c-1 0-1.8-.8-1.8-1.8V4.2c0-1 .8-1.8 1.8-1.8h6"/></g><path fill="#333" d="M5.4 7.2l6.2-6.2 2.2 2.2-6.2 6.2H5.4zM12.2.4l.6-.4c.3-.2.7-.2 1 .1l1 1c.3.3.3.7.1 1l-.5.6z"/></svg></div>
<div class="qb" style="left:585px;top:482px"><span style="position:absolute;left:11px;top:13px;width:12px;height:4px;background:#d9432f;border-radius:1px"></span></div>
<div class="inp c num" style="left:620px;top:482px;width:158px;border-radius:0;line-height:34px">20.00</div>
<div class="qb" style="left:778px;top:482px"><span style="position:absolute;left:11px;top:14px;width:11px;height:3px;background:#1e6e46"></span><span style="position:absolute;left:15px;top:10px;width:3px;height:11px;background:#1e6e46"></span></div>
<div class="inp c num" style="left:819px;top:482px;width:150px;line-height:34px">20.000</div>
<div class="inp ro c num" style="left:974px;top:482px;width:93px;line-height:34px">0.000</div>
<div class="inp ro c num" style="left:1071px;top:482px;width:113px;line-height:34px">33.030</div>
<div class="inp ro c num" style="left:1188px;top:482px;width:112px;line-height:34px">20.000</div>
<div class="inp ro c num" style="left:1305px;top:482px;width:112px;border-color:#f0ad4e;line-height:34px">400.000</div>
<div class="del" style="top:484px"></div>
<div class="inp b" style="left:273px;top:537px;width:307px;padding-left:12px;color:#337ab7;font-size:13px;letter-spacing:-.3px;line-height:34px">Colgate toothpaste<svg style="display:inline-block;vertical-align:-1px;margin-left:3px" width="13.5" height="11.5" viewBox="0 0 15 14" preserveAspectRatio="none"><g fill="none" stroke="#444" stroke-width="1.1"><path d="M11 8.2v2.6c0 1-.8 1.8-1.8 1.8H2.6c-1 0-1.8-.8-1.8-1.8V4.2c0-1 .8-1.8 1.8-1.8h6"/></g><path fill="#333" d="M5.4 7.2l6.2-6.2 2.2 2.2-6.2 6.2H5.4zM12.2.4l.6-.4c.3-.2.7-.2 1 .1l1 1c.3.3.3.7.1 1l-.5.6z"/></svg></div>
<div class="qb" style="left:585px;top:537px"><span style="position:absolute;left:11px;top:13px;width:12px;height:4px;background:#d9432f;border-radius:1px"></span></div>
<div class="inp c num" style="left:620px;top:537px;width:158px;border-radius:0;line-height:34px">20.00</div>
<div class="qb" style="left:778px;top:537px"><span style="position:absolute;left:11px;top:14px;width:11px;height:3px;background:#1e6e46"></span><span style="position:absolute;left:15px;top:10px;width:3px;height:11px;background:#1e6e46"></span></div>
<div class="inp c num" style="left:819px;top:537px;width:150px;line-height:34px">100.000</div>
<div class="inp ro c num" style="left:974px;top:537px;width:93px;line-height:34px">0.000</div>
<div class="inp ro c num" style="left:1071px;top:537px;width:113px;line-height:34px">165.140</div>
<div class="inp ro c num" style="left:1188px;top:537px;width:112px;line-height:34px">100.000</div>
<div class="inp ro c num" style="left:1305px;top:537px;width:112px;border-color:#f0ad4e;line-height:34px">2000.000</div>
<div class="del" style="top:539px"></div>
<div class="inp b" style="left:273px;top:593px;width:307px;padding-left:12px;color:#337ab7;font-size:13px;letter-spacing:-.3px;line-height:34px">Fastrack Watch<svg style="display:inline-block;vertical-align:-1px;margin-left:3px" width="13.5" height="11.5" viewBox="0 0 15 14" preserveAspectRatio="none"><g fill="none" stroke="#444" stroke-width="1.1"><path d="M11 8.2v2.6c0 1-.8 1.8-1.8 1.8H2.6c-1 0-1.8-.8-1.8-1.8V4.2c0-1 .8-1.8 1.8-1.8h6"/></g><path fill="#333" d="M5.4 7.2l6.2-6.2 2.2 2.2-6.2 6.2H5.4zM12.2.4l.6-.4c.3-.2.7-.2 1 .1l1 1c.3.3.3.7.1 1l-.5.6z"/></svg></div>
<div class="qb" style="left:585px;top:593px"><span style="position:absolute;left:11px;top:13px;width:12px;height:4px;background:#d9432f;border-radius:1px"></span></div>
<div class="inp c num" style="left:620px;top:593px;width:158px;border-radius:0;line-height:34px">20.00</div>
<div class="qb" style="left:778px;top:593px"><span style="position:absolute;left:11px;top:14px;width:11px;height:3px;background:#1e6e46"></span><span style="position:absolute;left:15px;top:10px;width:3px;height:11px;background:#1e6e46"></span></div>
<div class="inp c num" style="left:819px;top:593px;width:150px;line-height:34px">1500.000</div>
<div class="inp ro c num" style="left:974px;top:593px;width:93px;line-height:34px">0.000</div>
<div class="inp ro c num" style="left:1071px;top:593px;width:113px;line-height:34px">2700.000</div>
<div class="inp ro c num" style="left:1188px;top:593px;width:112px;line-height:34px">1635.000</div>
<div class="inp ro c num" style="left:1305px;top:593px;width:112px;border-color:#f0ad4e;line-height:34px">32700.000</div>
<div class="del" style="top:595px"></div>
<div class="p lb" style="left:230px;width:200px;top:697.5px;letter-spacing:0px">Total Quantities</div>
<div class="p b" style="left:460px;top:701px;font-size:18px;line-height:24px;color:#2d6a4f">80</div>
<div class="p lb" style="left:230px;width:200px;top:749px;letter-spacing:-0.15px">Other Charges</div>
<div class="p lb" style="left:230px;width:200px;top:797.5px;letter-spacing:-0.2px">Discount on All</div>
<div class="p lb" style="left:230px;width:200px;top:846.5px;letter-spacing:0px">Note</div>
<div class="inp r num" style="left:460px;top:741px;width:185px;padding-right:12px;line-height:34px">0.000</div>
<div class="inp" style="left:675px;top:741px;width:185px;padding-left:16px;color:#555;line-height:34px">-Select-<span style="position:absolute;right:0;top:0;width:17px;height:32px;background:#dee0e6;border:1px dotted #b4b8c1;border-right:1px solid #a9adb6;border-radius:2px"></span><svg style="position:absolute;right:4px;top:12px" width="9" height="6" viewBox="0 0 9 6"><path d="M1 1l3.5 3.5L8 1" fill="none" stroke="#444" stroke-width="1.3"/></svg></div>
<div class="inp r num" style="left:460px;top:790px;width:185px;padding-right:12px;line-height:34px">0.000</div>
<div class="inp" style="left:675px;top:790px;width:185px;padding-left:16px;color:#555;line-height:34px">Per%<span style="position:absolute;right:0;top:0;width:17px;height:32px;background:#dee0e6;border:1px dotted #b4b8c1;border-right:1px solid #a9adb6;border-radius:2px"></span><svg style="position:absolute;right:4px;top:12px" width="9" height="6" viewBox="0 0 9 6"><path d="M1 1l3.5 3.5L8 1" fill="none" stroke="#444" stroke-width="1.3"/></svg></div>
<div class="inp" style="left:460px;top:839px;width:400px;height:70px"><svg style="position:absolute;right:2px;bottom:1px" width="9" height="9" viewBox="0 0 9 9"><g fill="#9c9c9c"><rect x="7" y="0" width="2" height="2"/><rect x="4" y="3.5" width="2" height="2"/><rect x="7" y="3.5" width="2" height="2"/><rect x="0.4" y="7" width="2" height="2"/><rect x="4" y="7" width="2" height="2"/><rect x="7" y="7" width="2" height="2"/></g></svg></div>
<div class="p tot" style="left:837px;width:300px;top:699px">Subtotal</div>
<div class="p tot" style="left:1158px;width:200px;top:700px;font-size:15.5px;letter-spacing:.9px"><span class="rs" style="font-weight:400;font-size:14px;letter-spacing:0;margin-right:3.5px">₹</span>71100.000</div>
<div class="p tot" style="left:837px;width:300px;top:739px">Other Charges</div>
<div class="p tot" style="left:1158px;width:200px;top:740px;font-size:15.5px;letter-spacing:.9px"><span class="rs" style="font-weight:400;font-size:14px;letter-spacing:0;margin-right:3.5px">₹</span>0.000</div>
<div class="p tot" style="left:837px;width:300px;top:779px">Discount on All</div>
<div class="p tot" style="left:1158px;width:200px;top:780px;font-size:15.5px;letter-spacing:.9px"><span class="rs" style="font-weight:400;font-size:14px;letter-spacing:0;margin-right:3.5px">₹</span>0.000</div>
<div class="p tot" style="left:837px;width:300px;top:819px">Round Off<svg style="display:inline-block;vertical-align:-1px;margin-left:4px" width="15" height="15" viewBox="0 0 15 15"><circle cx="7.5" cy="7.5" r="7.2" fill="#dd4b39"/><path fill="#fff" d="M6.2 2.4h2.6v2.2H6.2zM5.4 6h3.4v4.8h1v1.6H5.4v-1.6h1V7.6h-1z"/></svg></div>
<div class="p tot" style="left:1158px;width:200px;top:820px;font-size:15.5px;letter-spacing:.9px"><span class="rs" style="font-weight:400;font-size:14px;letter-spacing:0;margin-right:3.5px">₹</span>0.000</div>
<div class="p tot" style="left:837px;width:300px;top:859px">Grand Total</div>
<div class="p tot" style="left:1158px;width:200px;top:860px;font-size:15.5px;letter-spacing:.9px"><span class="rs" style="font-weight:400;font-size:14px;letter-spacing:0;margin-right:3.5px">₹</span>71100.000</div>
<div class="p hd" style="left:285px;top:943px">Previous Payments Information :</div>
<div class="p" style="left:285px;top:975px;width:1179px;height:36px;background:#d2d6de"></div>
<div class="p" style="left:285px;top:1011px;width:1179px;height:75px;border:1px solid #f4f4f4;border-top:0"></div>
<div class="hl" style="left:285px;top:1048px;width:1179px"></div>
<div class="vl" style="left:534px;top:975px;height:73px"></div>
<div class="vl" style="left:1072px;top:975px;height:110px"></div>
<div class="p b c" style="left:203.0px;width:200px;top:984px;color:#222">#</div>
<div class="p b c" style="left:327.5px;width:200px;top:984px;color:#222">Date</div>
<div class="p b c" style="left:569.5px;width:200px;top:984px;color:#222">Payment Type</div>
<div class="p b c" style="left:838.5px;width:200px;top:984px;color:#222">Payment Note</div>
<div class="p b c" style="left:1086.5px;width:200px;top:984px;color:#222">Payment</div>
<div class="p b c" style="left:1282.0px;width:200px;top:984px;color:#222">Action</div>
<div class="p b c" style="left:203.0px;width:200px;top:1021px;">1</div>
<div class="p b bn c" style="left:327.5px;width:200px;top:1021px;">19-04-2021</div>
<div class="p b c" style="left:569.5px;width:200px;top:1021px;">Cash</div>
<div class="p b r bn" style="left:1098px;width:200px;top:1021px"><span class="rs" style="letter-spacing:0;font-size:11.5px">₹</span> 71100.000</div>
<div class="p b r bn" style="left:1098px;width:200px;top:1058px"><span class="rs" style="letter-spacing:0;font-size:11.5px">₹</span> 71100.000</div>
<div class="p b r" style="left:870px;width:200px;top:1058px">Total</div>
<div class="p" style="left:1357px;top:1021px;font-family:'Liberation Serif',serif;font-size:14px;color:#dd4b39"><svg style="display:inline-block;vertical-align:-1px;margin-right:3px" width="11" height="12" viewBox="0 0 11 12"><path fill="#dd4b39" fill-rule="evenodd" d="M3.6 0h3.8l.8 1.4H11v1.2H0V1.4h2.8zM1 3.4h9v7.4c0 .7-.5 1.2-1.2 1.2H2.2C1.5 12 1 11.5 1 10.8zM2.8 4.8v5.4h1V4.8zM5 4.8v5.4h1V4.8zM7.2 4.8v5.4h1V4.8z"/></svg>Delete</div>
<div class="p hd" style="left:285px;top:1135px;letter-spacing:-.3px">Make Payment :</div>
<div class="p" style="left:285px;top:1166px;width:1179px;height:174px;background:#d2d6de;border-radius:3px;box-shadow:0 1px 1px rgba(0,0,0,.1)"></div>
<div class="p b" style="left:295px;top:1177px;color:#222">Amount</div>
<div class="p b" style="left:691px;top:1177px;color:#222">Payment Type</div>
<div class="p b" style="left:1088px;top:1177px;color:#222">Account</div>
<div class="inp" style="left:295px;top:1201px;width:366px;border-radius:0"></div>
<div class="inp sel2" style="left:691px;top:1201px;width:366px;border-radius:2px"><span class="tx">-Select-</span><span class="caret" style="right:9px;top:14px"></span></div>
<div class="inp sel2" style="left:1088px;top:1201px;width:366px;border-radius:2px"><span class="tx">-None-</span><span class="caret" style="right:9px;top:14px"></span></div>
<div class="p b" style="left:295px;top:1236px;color:#222">Payment Note</div>
<div class="inp" style="left:295px;top:1260px;width:1159px;height:70px;border-radius:0"><svg style="position:absolute;right:2px;bottom:1px" width="9" height="9" viewBox="0 0 9 9"><g fill="#9c9c9c"><rect x="7" y="0" width="2" height="2"/><rect x="4" y="3.5" width="2" height="2"/><rect x="7" y="3.5" width="2" height="2"/><rect x="0.4" y="7" width="2" height="2"/><rect x="4" y="7" width="2" height="2"/><rect x="7" y="7" width="2" height="2"/></g></svg></div>
<div class="hl" style="left:245px;top:1369px;width:1259px"></div>
<div class="btn" style="left:580px;top:1381px;width:280px;background:#00a65a;border:1px solid #008d4c">Update</div>
<div class="btn" style="left:889px;top:1381px;width:281px;background:#f39c12;border:1px solid #e08e0b">Close</div>
<div class="footer"><span class="p" style="left:15px;top:16px">Copyright © 2021 All rights reserved.</span><span class="p" style="right:15px;top:16px;letter-spacing:-.2px">Billing Book -v1.0</span></div>
</div>
</body>
</html>
